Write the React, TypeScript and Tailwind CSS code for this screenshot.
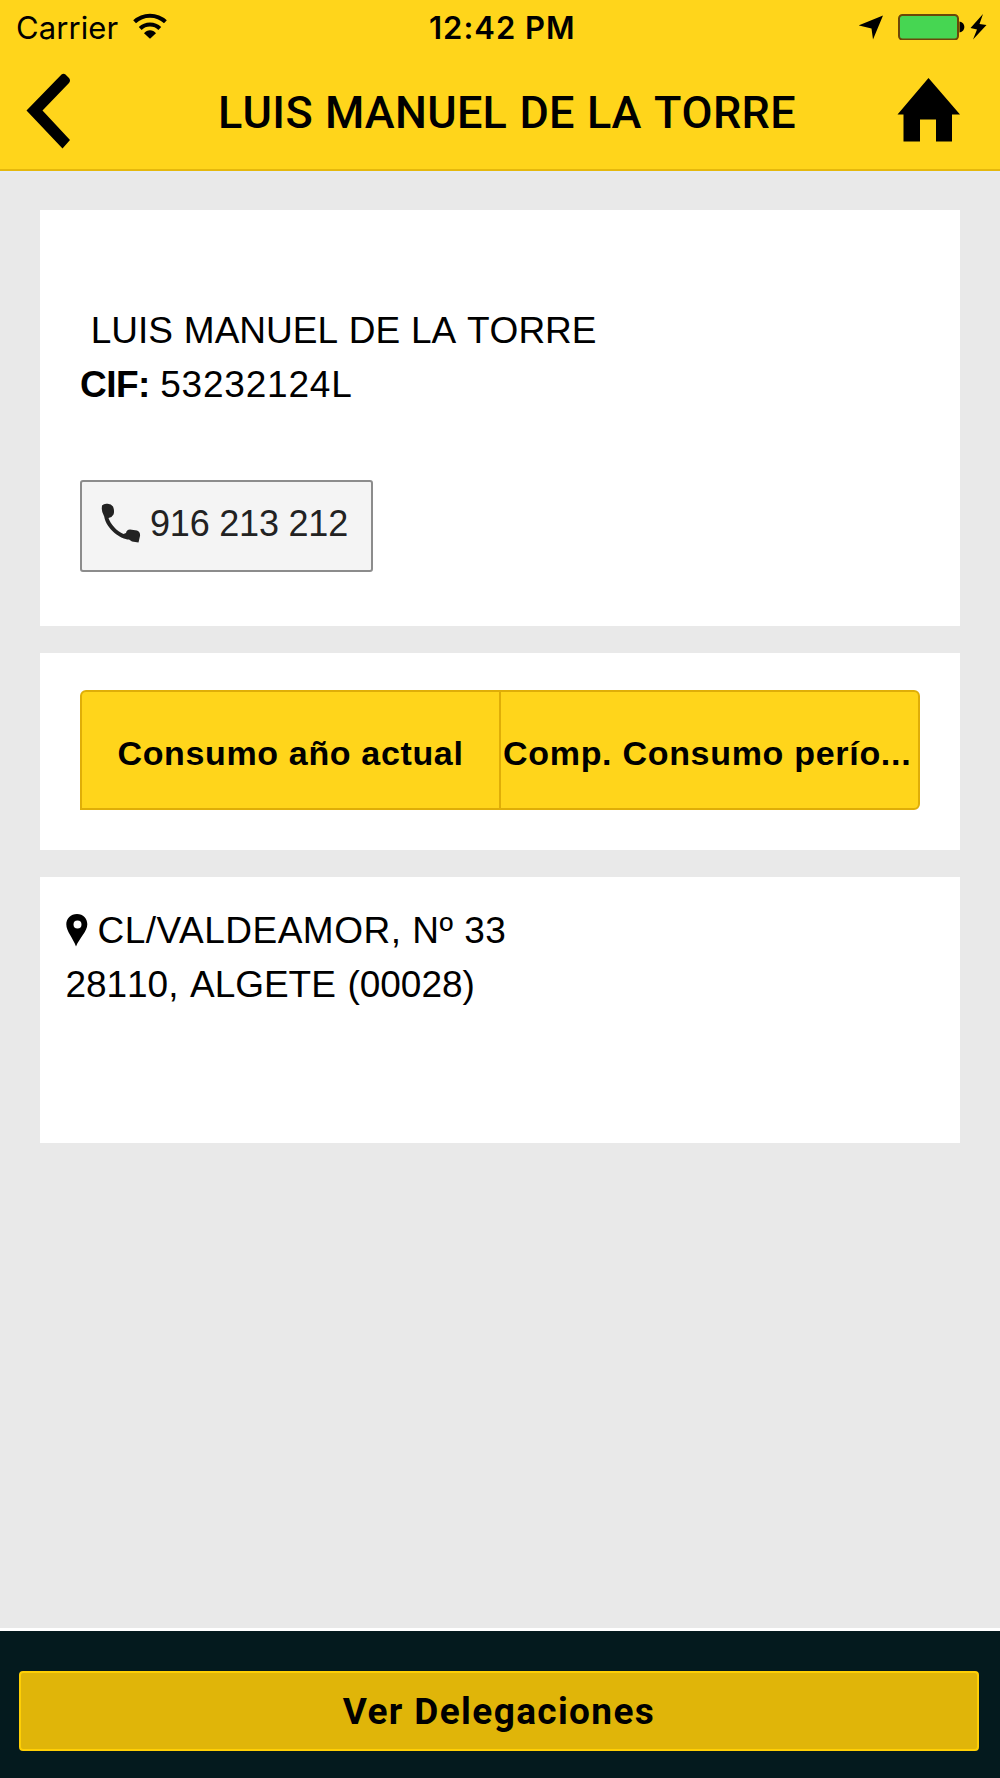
function StatusBar() {
  return (
    <div className="flex h-[55px] items-center font-['Inter',sans-serif] text-[31px] leading-[55px]">
      <div className="flex w-[429px] shrink-0 items-center gap-[15px] pl-[16px]">
        <span className="tracking-[0.1px]">Carrier</span>
        <svg width="34" height="26" viewBox="0 0 34 26" className="mb-[3px]">
          <path d="M1.6 8.8C10 0.6 24 0.6 32.4 8.8" fill="none" stroke="#000" strokeWidth="4" />
          <path d="M7.2 15.5C12.5 10.2 21.5 10.2 26.8 15.5" fill="none" stroke="#000" strokeWidth="4" />
          <path d="M11 20.2C14 16.2 20 16.2 23 20.2L17 25.8Z" />
        </svg>
      </div>
      <span className="font-semibold tracking-[1px]">12:42 PM</span>
      <svg width="129" height="26" viewBox="0 0 129 26" className="mr-[12px] mb-px ml-auto">
        <path d="M24 1.5L14 25.5L12.500 14.5L-0.500 11.5Z" />
        <rect x="40" y="1" width="59" height="24.5" rx="3.5" fill="#46d652" stroke="#6b4708" strokeWidth="2" />
        <path d="M100.5 7.5C107 8.5 107 17.5 100.5 18.5Z" />
        <path d="M124 0L111.5 14L118 15.5L114 25.5L127.5 11L120.5 10Z" />
      </svg>
    </div>
  );
}

function Header() {
  return (
    <header className="h-[171px] border-b-2 border-[#e5b80d] bg-[#ffd51b]">
      <StatusBar />
      <div className="flex h-[114px] items-center pr-[39px] pl-[26px]">
        <svg width="45" height="76" viewBox="0 0 45 76" className="mb-[2px]">
          <path d="M0.5 37.5L35.5 1.5Q37.5 0 39.5 1.5L43 5Q45 7.5 43 10L16.5 37.5L44 67L36.5 75.5Z" />
        </svg>
        <h1 className="mt-[2px] ml-[147px] font-['Roboto',sans-serif] text-[45px] font-medium tracking-[0.3px] [word-spacing:0.7px] whitespace-nowrap [font-kerning:none]">
          LUIS MANUEL DE LA TORRE
        </h1>
        <svg width="64" height="64" viewBox="0 0 64 64" className="mb-[4px] ml-auto">
          <path d="M31.5 0L63 36.5H55V63.5H39V41.5H23V63.5H6.5V36.5H0.5Z" />
        </svg>
      </div>
    </header>
  );
}

function PhoneButton() {
  return (
    <button className="mt-[69px] flex h-[92px] w-[293px] items-center rounded-[3px] border-2 border-[#8c8c8c] bg-[#f4f4f4] pb-[5px] pl-[19px] text-[#222]">
      <svg width="40" height="40" viewBox="0 0 40 40" className="mb-[2px]" fill="#222">
        <path d="M1 2.5Q3 0.5 6 0.8Q10 0.5 12 3.5Q13.8 8 12.5 11.5Q11 14.5 7.5 15C9.5 21 16 28.5 22.5 31L25 30Q25.5 26.8 29 26.5L36 27.5Q39.5 29 39 33L37.5 39.5L31 38.5L28 36.5C20 36.5 5 26 3.2 13.5Q0.5 9 0.8 5Z" />
      </svg>
      <span className="ml-[9px] text-[36px] tracking-[-0.2px] whitespace-nowrap [font-kerning:none]">
        916 213 212
      </span>
    </button>
  );
}

export default function App() {
  return (
    <div className="flex h-[1778px] w-[1000px] flex-col overflow-hidden bg-[#e9e9e9] font-['Liberation_Sans',Arial,sans-serif] text-black">
      <Header />

      <main className="flex flex-1 flex-col gap-[27px] border-t-2 border-b-3 border-t-[#e5ebf5] border-b-white px-[40px] pt-[37px]">
        <section className="h-[416px] bg-white pt-[94px] pl-[40px] text-[37px] leading-[53.5px] [font-kerning:none]">
          <p className="[word-spacing:0.5px]">&nbsp;LUIS MANUEL DE LA TORRE</p>
          <p>
            <b className="tracking-[-0.5px]">CIF:</b> <span className="tracking-[0.8px]">53232124L</span>
          </p>
          <PhoneButton />
        </section>

        <section className="h-[197px] bg-white px-[40px] pt-[37px]">
          <div className="flex h-[120px] rounded-[6px] rounded-bl-none border-2 border-[#dfae08] bg-[#ffd51b] text-[34px] font-bold whitespace-nowrap">
            <button className="flex w-[419px] items-center justify-center border-r-2 border-[#dfae08] pt-[7px] tracking-[0.65px]">
              Consumo año actual
            </button>
            <button className="flex flex-1 items-center pt-[7px] pl-[2px] tracking-[0.7px]">
              Comp. Consumo perío...
            </button>
          </div>
        </section>

        <section className="h-[266px] bg-white pt-[27px] pl-[25.5px] text-[37px] leading-[54px]">
          <p className="flex items-center tracking-[0.5px]">
            <svg width="22" height="33" viewBox="0 0 22 33" className="mr-[10px] mb-px">
              <path
                fillRule="evenodd"
                d="M11 0C4.8 0 0.3 4.5 0.3 10.3C0.3 17.5 7 24 10 32.5C13.5 24 21.3 17.5 21.3 10.3C21.3 4.5 17.2 0 11 0ZM11.5 6.5A4 4 0 1 1 11.5 14.5A4 4 0 1 1 11.5 6.5Z"
              />
            </svg>
            CL/VALDEAMOR, Nº 33
          </p>
          <p className="tracking-[-0.05px] [word-spacing:1.5px] [font-kerning:none]">28110, ALGETE (00028)</p>
        </section>
      </main>

      <footer className="h-[147px] bg-[#041a1e] pt-[40px] pr-[21px] pl-[19px]">
        <button className="flex h-[80px] w-full items-center justify-center rounded-[4px] border-2 border-[#ffcf05] bg-[#e0b509] pt-[2px] font-['Roboto',sans-serif] text-[37px] font-bold tracking-[1.37px]">
          Ver Delegaciones
        </button>
      </footer>
    </div>
  );
}
